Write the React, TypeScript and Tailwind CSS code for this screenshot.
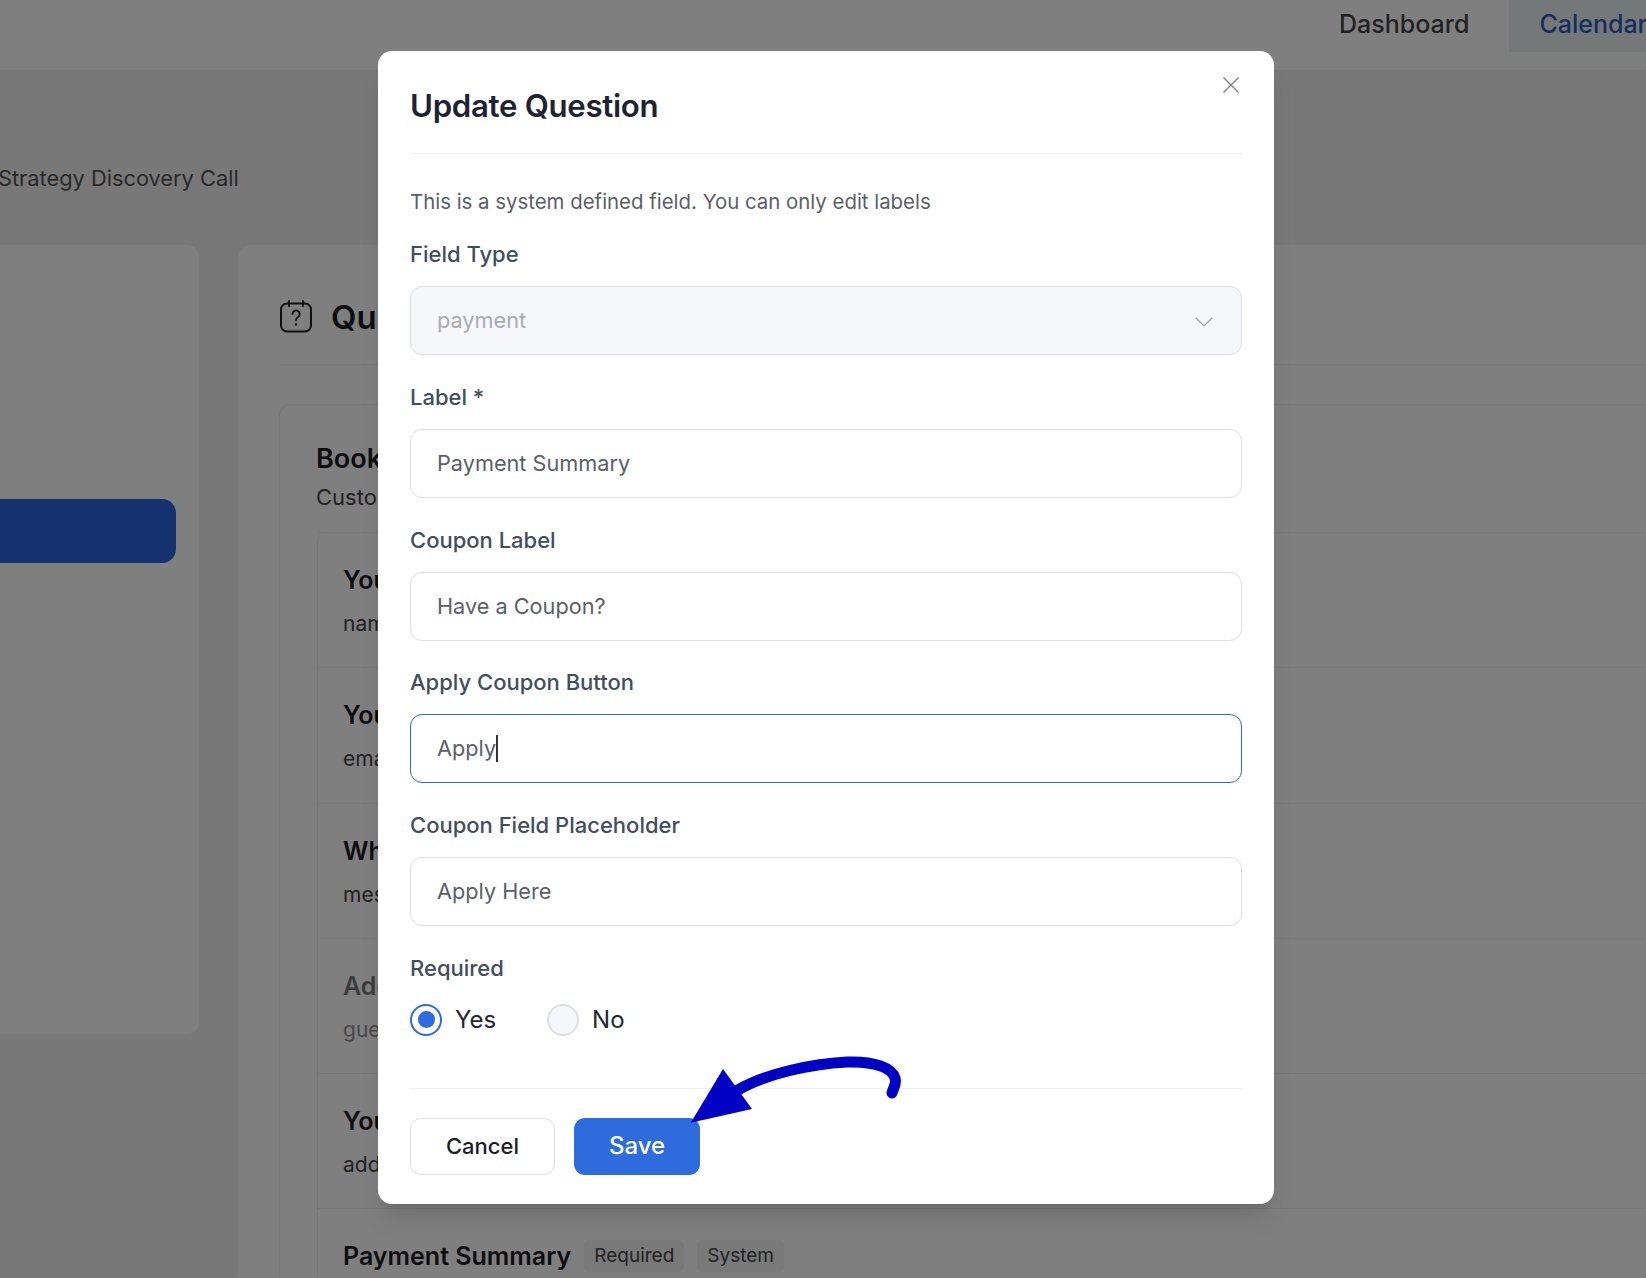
import React from "react";

const font = "font-['Inter','Noto_Sans',sans-serif]";

function Field({ label, value, focused }: { label: string; value: string; focused?: boolean }) {
  return (
    <div className="flex flex-col">
      <label className="h-[30px] text-[22px] leading-[30px] font-medium text-[#414e61]">{label}</label>
      <div className={`mt-[17px] flex h-[69px] items-center rounded-[12px] border bg-white px-[26px] text-[21.7px] text-[#5a5f67] ${focused ? "border-[#2f68c9]" : "border-[#dcdfe5]"}`}>
        <span>{value}</span>
        {focused && <span className="h-[27px] w-[1.5px] bg-[#333]" />}
      </div>
    </div>
  );
}

function Row({ title, sub, dim, tags }: { title: string; sub: string; dim?: boolean; tags?: boolean }) {
  return (
    <div className={`flex h-[135.3px] flex-col border-t border-[#f0f0f0] px-[25px] pt-[30px] ${dim ? "opacity-60" : ""}`}>
      <div className="flex items-center gap-[13px]">
        <div className="text-[25px] leading-[34px] font-semibold whitespace-nowrap text-[#1b1d22]">{title}</div>
        {tags && (
          <>
            <span className="rounded-[5px] bg-[#f2f2f2] px-[10px] py-[3px] text-[19px] leading-[26px] text-[#444]">Required</span>
            <span className="rounded-[5px] bg-[#f2f2f2] px-[10px] py-[3px] text-[19px] leading-[26px] text-[#444]">System</span>
          </>
        )}
      </div>
      <div className="mt-[12px] text-[21px] leading-[30px] text-[#444]">{sub}</div>
    </div>
  );
}

export default function App() {
  return (
    <div className={`relative h-screen w-full overflow-hidden bg-[#f0f0f0] ${font}`}>
      <header className="flex h-[71px] items-start border-b border-[#eeeeee] bg-white pl-[1299px]">
        <span className="px-[40px] pt-[7px] text-[25px] leading-[34px] font-medium whitespace-nowrap text-[#444]">Dashboard</span>
        <span className="h-[52px] bg-[#ebf0f3] pt-[7px] pl-[30px] text-[25px] leading-[34px] font-medium whitespace-nowrap text-[#2b5cb8]">Calendars</span>
      </header>

      <div className="-ml-[2px] h-[174px] pt-[92px] text-[21.8px] leading-[31px] whitespace-nowrap text-[#555]">Strategy Discovery Call</div>

      <main className="flex gap-[39px]">
        <aside className="h-[789px] w-[199px] shrink-0 rounded-r-[12px] bg-white pt-[254px] pr-[23px]">
          <div className="h-[64px] rounded-r-[14px] bg-[#2b65dc]" />
        </aside>

        <section className="h-[1100px] min-w-0 flex-1 rounded-l-[14px] bg-white pl-[41px]">
          <div className="flex h-[120px] items-center gap-[18px] border-b border-[#eeeeee] pt-[24px]">
            <svg className="-mt-[2px]" width="34" height="34" viewBox="0 0 34 34" fill="none" stroke="#222" strokeWidth="2" strokeLinecap="round">
              <rect x="2" y="4.5" width="30" height="28" rx="6" />
              <path d="M10 2v5M24 2v5" />
              <path d="M13.5 15a3.6 3.6 0 1 1 5.6 3c-1.4.9-2.1 1.6-2.1 3" strokeWidth="1.9" />
              <circle cx="17" cy="25.5" r="0.6" fill="#222" strokeWidth="1.4" />
            </svg>
            <span className="text-[33px] leading-[40px] font-semibold text-[#1b1d22]">Questions</span>
          </div>

          <div className="mt-[39px] rounded-tl-[12px] border-t border-l border-[#eeeeee] pt-[35px] pl-[37px]">
            <div className="-ml-[1px] text-[27px] leading-[38px] font-semibold text-[#1b1d22]">Booking Questions</div>
            <div className="mt-[4px] -ml-[1px] text-[22px] leading-[31px] text-[#444]">Customize</div>
            <div className="mt-[19px] rounded-tl-[10px] border-l border-[#eeeeee]">
              <Row title="Your Name" sub="name" />
              <Row title="Your Email" sub="email" />
              <Row title="What" sub="message" />
              <Row title="Add Guests" sub="guests" dim />
              <Row title="Your Address" sub="address" />
              <Row title="Payment Summary" sub="payment" tags />
            </div>
          </div>
        </section>
      </main>

      <div className="absolute inset-0 bg-black/50 pt-[51px] pl-[378px]">
        <div className="h-[1153px] w-[896px] rounded-[14px] bg-white px-[32px] shadow-xl">
          <div className="relative h-[103px] border-b border-[#eceef1]">
            <h2 className="pt-[35px] text-[31.2px] leading-[40px] font-semibold tracking-[-0.3px] text-[#1c2433]">Update Question</h2>
            <svg className="absolute top-[26px] right-[3px]" width="16" height="16" viewBox="0 0 16 16" stroke="#7b7b7b" strokeWidth="1.3" fill="none">
              <path d="M0.5 0.5l15 15M15.5 0.5l-15 15" />
            </svg>
          </div>

          <p className="mt-[33px] text-[20.4px] leading-[30px] text-[#5a5f67]">This is a system defined field. You can only edit labels</p>

          <div className="mt-[22px]">
            <label className="block h-[30px] text-[22px] leading-[30px] font-medium text-[#414e61]">Field Type</label>
            <div className="mt-[17px] flex h-[69px] items-center justify-between rounded-[12px] border border-[#dcdfe5] bg-[#f5f7fa] pr-[28px] pl-[26px] text-[21.7px] text-[#a8abb2]">
              <span>payment</span>
              <svg className="mt-[3px]" width="18" height="11" viewBox="0 0 18 11" fill="none" stroke="#9b9da3" strokeWidth="1.2"><path d="M1 1l8 8 8-8" /></svg>
            </div>
          </div>

          <div className="mt-[27px] flex flex-col gap-[26.5px]">
            <Field label="Label *" value="Payment Summary" />
            <Field label="Coupon Label" value="Have a Coupon?" />
            <Field label="Apply Coupon Button" value="Apply" focused />
            <Field label="Coupon Field Placeholder" value="Apply Here" />
          </div>

          <div className="mt-[27px]">
            <label className="block h-[30px] text-[22px] leading-[30px] font-medium text-[#414e61]">Required</label>
            <div className="mt-[21px] flex items-center">
              <span className="flex h-[32px] w-[32px] items-center justify-center rounded-full border-2 border-[#2e6bdd]">
                <span className="h-[17px] w-[17px] rounded-full bg-[#2e6bdd]" />
              </span>
              <span className="ml-[13px] text-[24px] leading-[32px] text-[#22262e]">Yes</span>
              <span className="ml-[51px] h-[32px] w-[32px] rounded-full border-2 border-[#dcdfe5] bg-[#f5f7fa]" />
              <span className="ml-[13px] text-[24px] leading-[32px] text-[#22262e]">No</span>
            </div>
          </div>

          <div className="mt-[52px] flex gap-[19px] border-t border-[#eceef1] pt-[29px]">
            <button className="h-[57px] w-[145px] rounded-[11px] border border-[#dcdfe5] bg-white text-[22px] font-medium text-[#1b1d22]">Cancel</button>
            <button className="h-[57px] w-[126px] rounded-[11px] bg-[#2e6bdd] text-[24px] font-medium text-white">Save</button>
          </div>
        </div>
      </div>

      <svg className="pointer-events-none absolute top-[1040px] left-[660px]" width="250" height="130" viewBox="0 0 250 130" fill="none">
        <path d="M78 50C105 34 150 24 187 22C215 21 232 28 235 38C237 44 233 48 232 53" stroke="#0202c4" strokeWidth="11" strokeLinecap="round" />
        <path d="M30.7 82.7L63 29L92 69Z" fill="#0202c4" />
      </svg>
    </div>
  );
}
